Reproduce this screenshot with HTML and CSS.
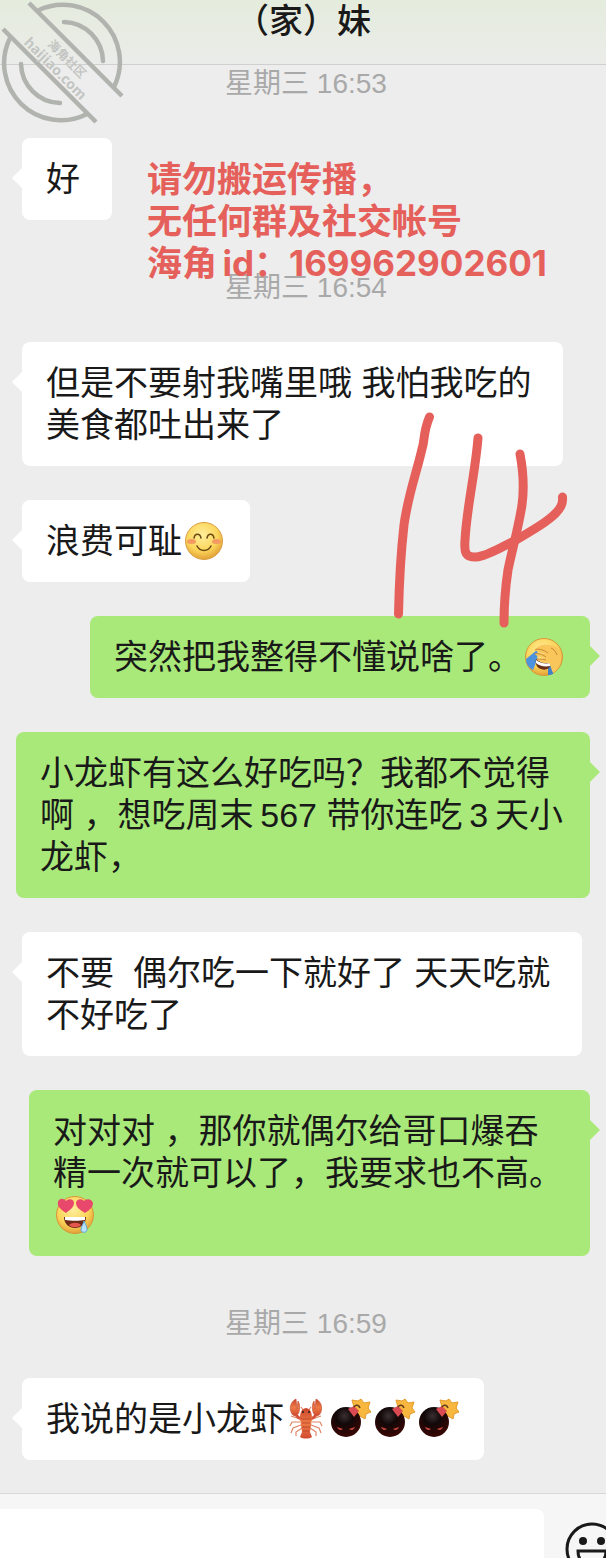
FILE: index.html
```
<!DOCTYPE html>
<html lang="zh-CN">
<head>
    <meta charset="UTF-8">
    <meta name="viewport" content="width=device-width, initial-scale=1.0">
    <title>（家）妹</title>
    <link rel="stylesheet" href="styles.css">
</head>
<body>

    <!-- Shared emoji drawings -->
    <svg class="sprites" aria-hidden="true">
        <defs>
            <radialGradient id="face" cx="45%" cy="35%" r="65%">
                <stop offset="0" stop-color="#ffee9c"/>
                <stop offset="0.65" stop-color="#fbd55a"/>
                <stop offset="1" stop-color="#e2a136"/>
            </radialGradient>
            <radialGradient id="ball" cx="45%" cy="30%" r="70%">
                <stop offset="0" stop-color="#3a3032"/>
                <stop offset="0.4" stop-color="#120808"/>
                <stop offset="1" stop-color="#3a0603"/>
            </radialGradient>
            <linearGradient id="shell" x1="0" y1="0" x2="0" y2="1">
                <stop offset="0" stop-color="#c9432b"/>
                <stop offset="0.5" stop-color="#ee7b45"/>
                <stop offset="1" stop-color="#d14a30"/>
            </linearGradient>
        </defs>
        <symbol id="smile" viewBox="0 0 42 42">
            <circle cx="21" cy="21" r="18.5" fill="url(#face)" stroke="#d9a044"/>
            <ellipse cx="8.500" cy="21.500" rx="4.500" ry="2.500" fill="#f29a62"/>
            <ellipse cx="33.500" cy="21.500" rx="4.500" ry="2.500" fill="#f29a62"/>
            <path d="M11 18c1-5 6-5 7 0M24 18c1-5 6-5 7 0M14 26c3 6 11 6 14 0" fill="none" stroke="#6b4712" stroke-width="1.500" stroke-linecap="round"/>
        </symbol>
        <symbol id="facepalm" viewBox="0 0 42 42">
            <circle cx="21" cy="21" r="18.5" fill="url(#face)" stroke="#d9963a"/>
            <path d="M3 23l11-9c2 5-1 13-4 20-4-2-7-6-7-11z" fill="#4d92dc"/>
            <path d="M25 30h7l-2 8c-2 1-4 1-5 1z" fill="#3f80cb"/>
            <path d="M13 23c5 4 10 5 15 3 0 7-6 9-10 7-4-1-6-5-5-10z" fill="#6a2e17"/>
            <path d="M13 24c4 3 9 4 14 3v3c-5 1-11 0-14-3z" fill="#fff"/>
            <path d="M12 14c3-5 9-6 14-5 7 0 11 4 12 10 1 8-2 14-8 18-2-4-2-7-4-10-5 0-10-1-12-4 3 0 6 0 8-1-5-1-9-2-10-4 3-1 7 0 10 0-4-1-8-2-10-4z" fill="#f9c65c"/>
            <path d="M12 14c3-2 9 0 13 3M12 18c3-1 7 0 11 3M14 23c3 0 6 0 9 1M28 12c3 1 5 4 6 7" fill="none" stroke="#c98736"/>
        </symbol>
        <symbol id="hearts" viewBox="0 0 42 42">
            <circle cx="21" cy="21" r="18.5" fill="url(#face)" stroke="#d9963a"/>
            <path d="M12 19C6 15 3 12 4 8c1-4 6-4 8-1 3-3 8-2 8 2s-4 7-8 10zM31 19c-5-3-9-6-9-10s6-5 8-2c3-3 8-2 9 2 0 4-3 7-8 10z" fill="#e8486c"/>
            <path d="M10 23h22c0 7-5 11-11 11s-11-4-11-11z" fill="#6e2a18"/>
            <path d="M11 23h20v3c-6 1-14 1-20 0z" fill="#fff"/>
            <path d="M15 31c3-3 9-3 12 0-3 3-9 3-12 0z" fill="#e4574e"/>
            <path d="M30 27c2 4 3 6 3 9s-6 3-6 0 2-5 3-9z" fill="#b9e3fb" stroke="#63a9d8"/>
        </symbol>
        <symbol id="lobster" viewBox="0 0 42 42">
            <path d="M15 21L6 18M15 24H7l-2 4M16 27l-8 3-2 5M17 30l-6 4v4M27 21l9-3M27 24h8l2 4M26 27l8 3 2 5M25 30l6 4v4M19 13l-3-4M23 13l3-4" fill="none" stroke="#e08465" stroke-width="1.200"/>
            <path d="M17 21c-5-1-6-4-7-8M25 21c5-1 6-4 7-8" fill="none" stroke="#d4533a" stroke-width="3"/>
            <path d="M11 1C5 4 4 11 7 16c2 3 6 2 7-2 1-4 1-8-1-11l-1 8zM31 1c6 3 7 10 4 15-2 3-6 2-7-2-1-4-1-8 1-11l1 8z" fill="url(#shell)" stroke="#c9553a" stroke-width="0.700"/>
            <path d="M21 10c5 1 6 5 6 11l-2 13 2 5c-3 2-9 2-12 0l2-5-2-13c0-6 1-10 6-11z" fill="url(#shell)"/>
            <path d="M16 21h10M17 25h8M17 29h8M18 33h6" stroke="#b9462b" stroke-width="0.900"/>
            <circle cx="18" cy="14" r="1" fill="#222"/>
            <circle cx="24" cy="14" r="1" fill="#222"/>
        </symbol>
        <symbol id="bomb" viewBox="0 0 42 42">
            <path d="M23 2l6 1 3-2 3 4 6-1-2 6 3 4-5 2-1 5-5-3-6 1 1-6z" fill="#f8b83f" stroke="#e39a2c"/>
            <circle cx="17" cy="24" r="15" fill="url(#ball)"/>
            <path d="M19 11l6-3 5 5-5 6z" fill="#da4a52"/>
            <path d="M25 9c2-3 5-2 6 1" fill="none" stroke="#633b1b" stroke-width="1.500"/>
            <path d="M8 29l6 2c-2 2-5 1-6-2zM26 29l-6 2c2 2 5 1 6-2z" fill="#c9483c"/>
        </symbol>
    </svg>

    <div class="app">
        <header class="header">
            <h1 class="title">（家）妹</h1>
        </header>

        <main class="chat">
            <time class="time">星期三 16:53</time>
            <p class="bubble">好</p>
            <time class="time">星期三 16:54</time>
            <p class="bubble long">但是不要射我嘴里哦 我怕我吃的<br>美食都吐出来了</p>
            <p class="bubble">浪费可耻<svg class="emoji"><use href="#smile"/></svg></p>
            <p class="bubble mine">突然把我整得不懂说啥了。<svg class="emoji"><use href="#facepalm"/></svg></p>
            <p class="bubble mine long">小龙虾有这么好吃吗？我都不觉得<br>啊 ，想吃周末&thinsp;567 带你连吃&thinsp;3&thinsp;天小<br>龙虾，</p>
            <p class="bubble long">不要&nbsp; 偶尔吃一下就好了 天天吃就<br>不好吃了</p>
            <p class="bubble mine long">对对对 ，那你就偶尔给哥口爆吞<br>精一次就可以了，我要求也不高。<br><svg class="emoji"><use href="#hearts"/></svg></p>
            <time class="time">星期三 16:59</time>
            <p class="bubble">我说的是小龙虾<svg class="emoji"><use href="#lobster"/></svg><svg class="emoji"><use href="#bomb"/></svg><svg class="emoji"><use href="#bomb"/></svg><svg class="emoji"><use href="#bomb"/></svg></p>
        </main>

        <form class="footer">
            <input class="message-input" type="text" aria-label="消息">
            <button class="emoji-btn" type="button" aria-label="表情">
                <svg viewBox="0 0 56 56" fill="none" stroke="#191919" stroke-width="3">
                    <circle cx="28" cy="27" r="25"/>
                    <circle cx="19" cy="19" r="4" fill="#191919" stroke="none"/>
                    <circle cx="37" cy="19" r="4" fill="#191919" stroke="none"/>
                    <path d="M14 29h28c0 9-6 15-14 15s-14-6-14-15z"/>
                </svg>
            </button>
        </form>

        <!-- Marks drawn over the chat -->
        <svg class="logo" viewBox="0 0 126 126">
            <g fill="none" stroke="#b1b3af" stroke-width="4.500">
                <path d="M29 3l93 93M3 29l93 93"/>
                <path d="M38 10.500A57 57 0 0 1 114 87M10 38A57 57 0 0 0 87 114"/>
                <path d="M64 22A40 40 0 0 1 103 61M21 64A40 40 0 0 0 60 103" stroke-linecap="round"/>
            </g>
            <text class="logo-name" transform="translate(64 62) rotate(45)">海角社区</text>
            <text class="logo-url" transform="translate(52 72) rotate(45)">haijiao.com</text>
        </svg>
        <p class="notice">请勿搬运传播，<br>无任何群及社交帐号<br>海角&thinsp;id：169962902601</p>
        <svg class="scribble" viewBox="390 405 180 225">
            <path d="M429.500 417C423 432 425 440 422 449C416 475 408 495 404 525C400 560 399 590 398.500 614"/>
            <path d="M478 438C475 475 467 505 465 540C464 554 466 557 476 557C488 556 505 545 516 540C535 529 556 517 561 506Q563 502 562.500 497"/>
            <path d="M520 454C524 475 524 490 522 505C518 530 512 550 508 570C505 590 504 605 504 623"/>
        </svg>
    </div>

</body>
</html>
```
FILE: styles.css
```
body {
    margin: 0;
    background: #ededed;
    color: #191919;
    font-family: "Liberation Sans", "Noto Sans CJK SC", sans-serif;
}
.sprites { position: absolute; width: 0; height: 0; }
.app {
    position: relative;
    display: flex;
    flex-direction: column;
    height: 100vh;
    overflow: hidden;
}

/* Header */
.header {
    flex: none;
    height: 64px;
    background: linear-gradient(#e4ecdd, #ebece9);
    box-shadow: 0 1px #d0d1cf;
    text-align: center;
}
.title { margin: 0; font-size: 34px; line-height: 42px; font-weight: 500; }

/* Messages */
.chat {
    flex: none;
    display: flex;
    flex-direction: column;
    align-items: flex-start;
    gap: 34px;
    padding: 0 16px 33px 22px;
}
.time {
    align-self: center;
    margin-top: 14px;
    font-size: 28px;
    line-height: 40px;
    color: #a9a9a9;
}
.time:first-child { margin-top: 0; }
.bubble {
    position: relative;
    box-sizing: border-box;
    min-width: 90px;
    margin: 0;
    padding: 20px 24px;
    border-radius: 8px;
    background: #fff;
    font-size: 34px;
    line-height: 42px;
    white-space: nowrap;
}
.bubble::before {
    content: "";
    position: absolute;
    top: 30px;
    left: -10px;
    border: 10px solid transparent;
    border-left-width: 0;
    border-right-color: #fff;
}
.long { padding-right: 32px; }
.mine { align-self: flex-end; background: #a9e97a; }
.mine.long { padding-right: 27px; }
.mine::before {
    left: auto;
    right: -10px;
    border-width: 10px 0 10px 10px;
    border-left-color: #a9e97a;
}
.emoji { width: 44px; height: 42px; vertical-align: top; }

/* Input bar */
.footer {
    flex: none;
    display: flex;
    gap: 20px;
    padding: 15px 0;
    border-top: 1px solid #d8d8d8;
    background: #f6f6f6;
}
.message-input {
    flex: 1;
    min-width: 0;
    height: 82px;
    box-sizing: border-box;
    padding: 20px;
    border: none;
    border-radius: 0 8px 8px 0;
    background: #fff;
    font-size: 34px;
}
.emoji-btn {
    flex: none;
    width: 56px;
    margin-right: -14px;
    padding: 0;
    border: none;
    background: none;
}
.emoji-btn svg { display: block; width: 56px; height: 56px; }

/* Overlays */
.logo { position: absolute; top: 0; left: 0; width: 126px; height: 126px; }
.logo text { fill: #c3c5c2; font-weight: bold; text-anchor: middle; }
.logo-name { font-size: 12px; }
.logo-url { font-size: 14px; font-family: "Open Sans", sans-serif; }
.notice {
    position: absolute;
    top: 158px;
    left: 147px;
    margin: 0;
    font: bold 35px/42px Inter, "Noto Sans CJK SC", sans-serif;
    color: #e5605b;
    white-space: nowrap;
}
.scribble {
    position: absolute;
    top: 405px;
    left: 390px;
    width: 180px;
    height: 225px;
    fill: none;
    stroke: #e5605b;
    stroke-width: 9;
    stroke-linecap: round;
}
```
